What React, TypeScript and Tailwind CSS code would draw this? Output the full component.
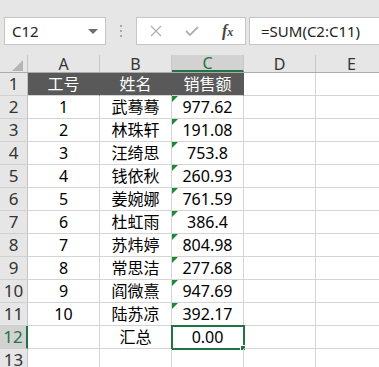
import React from "react";

const rows = [
  { no: "1", name: "武蓦蓦", amount: "977.62" },
  { no: "2", name: "林珠轩", amount: "191.08" },
  { no: "3", name: "汪绮思", amount: "753.8" },
  { no: "4", name: "钱依秋", amount: "260.93" },
  { no: "5", name: "姜婉娜", amount: "761.59" },
  { no: "6", name: "杜虹雨", amount: "386.4" },
  { no: "7", name: "苏炜婷", amount: "804.98" },
  { no: "8", name: "常思洁", amount: "277.68" },
  { no: "9", name: "阎微熹", amount: "947.69" },
  { no: "10", name: "陆苏凉", amount: "392.17" },
];

const font = "font-['Noto_Sans','Noto_Sans_CJK_SC',sans-serif]";

const RowHead = ({ n, active }: { n: number; active?: boolean }) => (
  <div
    className={
      "w-[28px] shrink-0 h-full flex items-end justify-center pb-[1px] text-[17px] leading-[20px] border-b border-[#d0d0d0] " +
      (active
        ? "bg-[#d2d2d2] text-[#217346] border-r-2 border-r-[#217346]"
        : "bg-[#e6e6e6] text-[#333] border-r border-r-[#c4c4c4]")
    }
  >
    {n}
  </div>
);

const Cell = ({
  children,
  className = "",
  flag,
}: {
  children?: React.ReactNode;
  className?: string;
  flag?: boolean;
}) => (
  <div
    className={
      "relative w-[72px] shrink-0 h-full flex items-center justify-center border-r border-b border-[#d4d4d4] text-[16px] " +
      className
    }
  >
    {flag && (
      <span className="absolute left-0 top-0 w-0 h-0 border-t-[6px] border-t-[#1c8a34] border-r-[6px] border-r-transparent" />
    )}
    {children}
  </div>
);

export default function App() {
  return (
    <div className={"w-[379px] h-[367px] overflow-hidden bg-white text-black " + font}>
      {/* formula bar */}
      <div className="h-[55px] bg-[#e6e6e6] pt-[17px] flex items-start">
        <div className="ml-[4px] w-[102px] h-[28px] bg-white border border-[#c6c6c6] flex items-center pl-[7px] pr-[7px] text-[15px] text-[#222]">
          <span className="flex-1">C12</span>
          <span className="w-0 h-0 border-l-[5px] border-r-[5px] border-t-[5px] border-l-transparent border-r-transparent border-t-[#6e6e6e]" />
        </div>
        <div className="w-[30px] h-[28px] flex flex-col items-center justify-center gap-[3px]">
          <span className="w-[2px] h-[2px] bg-[#a8a8a8]" />
          <span className="w-[2px] h-[2px] bg-[#a8a8a8]" />
          <span className="w-[2px] h-[2px] bg-[#a8a8a8]" />
        </div>
        <div className="w-[110px] h-[28px] bg-white border border-[#c6c6c6] flex items-center">
          <svg width="12" height="12" viewBox="0 0 12 12" className="ml-[13px]">
            <path d="M1 1 L11 11 M11 1 L1 11" stroke="#b0b0b0" strokeWidth="1.3" fill="none" />
          </svg>
          <svg width="14" height="12" viewBox="0 0 14 12" className="ml-[23px]">
            <path d="M1 6 L5 10 L13 2" stroke="#b0b0b0" strokeWidth="1.8" fill="none" />
          </svg>
          <span className="ml-[23px] text-[16px] font-bold text-[#444] italic font-['Liberation_Serif',serif]">
            f<span className="text-[12px]">x</span>
          </span>
        </div>
        <div className="ml-[3px] flex-1 h-[28px] bg-white border border-[#c6c6c6] border-r-0 flex items-center pl-[11px] text-[15px] text-[#222]">
          =SUM(C2:C11)
        </div>
      </div>

      {/* column headers */}
      <div className="h-[18px] flex bg-[#e6e6e6] border-b border-[#ababab] text-[16px] text-[#333]">
        <div className="w-[28px] shrink-0 relative border-r border-[#c4c4c4]">
          <span className="absolute right-[4px] bottom-[1px] w-0 h-0 border-l-[11px] border-l-transparent border-b-[11px] border-b-[#b4b4b4]" />
        </div>
        {["A", "B", "C", "D", "E"].map((c) => (
          <div
            key={c}
            className={
              "w-[72px] shrink-0 flex items-center justify-center border-r border-[#c8c8c8] leading-none " +
              (c === "C" ? "bg-[#d2d2d2] text-[#217346] border-b-2 border-b-[#217346]" : "")
            }
          >
            {c}
          </div>
        ))}
      </div>

      {/* row 1 */}
      <div className="h-[23px] flex">
        <RowHead n={1} />
        <Cell className="bg-[#595959] text-white border-r-[#595959] border-b-[#d4d4d4]">工号</Cell>
        <Cell className="bg-[#595959] text-white border-r-[#595959] border-b-[#d4d4d4]">姓名</Cell>
        <Cell className="bg-[#595959] text-white border-r-[#595959] border-b-[#d4d4d4]">销售额</Cell>
        <Cell />
        <Cell />
      </div>

      {rows.map((r, i) => (
        <div key={r.no} className="h-[23px] flex">
          <RowHead n={i + 2} />
          <Cell>{r.no}</Cell>
          <Cell>{r.name}</Cell>
          <Cell flag>{r.amount}</Cell>
          <Cell />
          <Cell />
        </div>
      ))}

      {/* row 12 */}
      <div className="h-[23px] flex">
        <RowHead n={12} active />
        <Cell />
        <Cell>汇总</Cell>
        <Cell>
          <span className="absolute -left-[1px] -top-[1px] w-[74px] h-[25px] border-2 border-[#217346]" />
          <span className="absolute -right-[3px] -bottom-[3px] w-[6px] h-[6px] bg-[#217346] border border-white" />
          0.00
        </Cell>
        <Cell />
        <Cell />
      </div>

      {/* row 13 */}
      <div className="h-[23px] flex">
        <RowHead n={13} />
        <Cell />
        <Cell />
        <Cell />
        <Cell />
        <Cell />
      </div>
    </div>
  );
}
